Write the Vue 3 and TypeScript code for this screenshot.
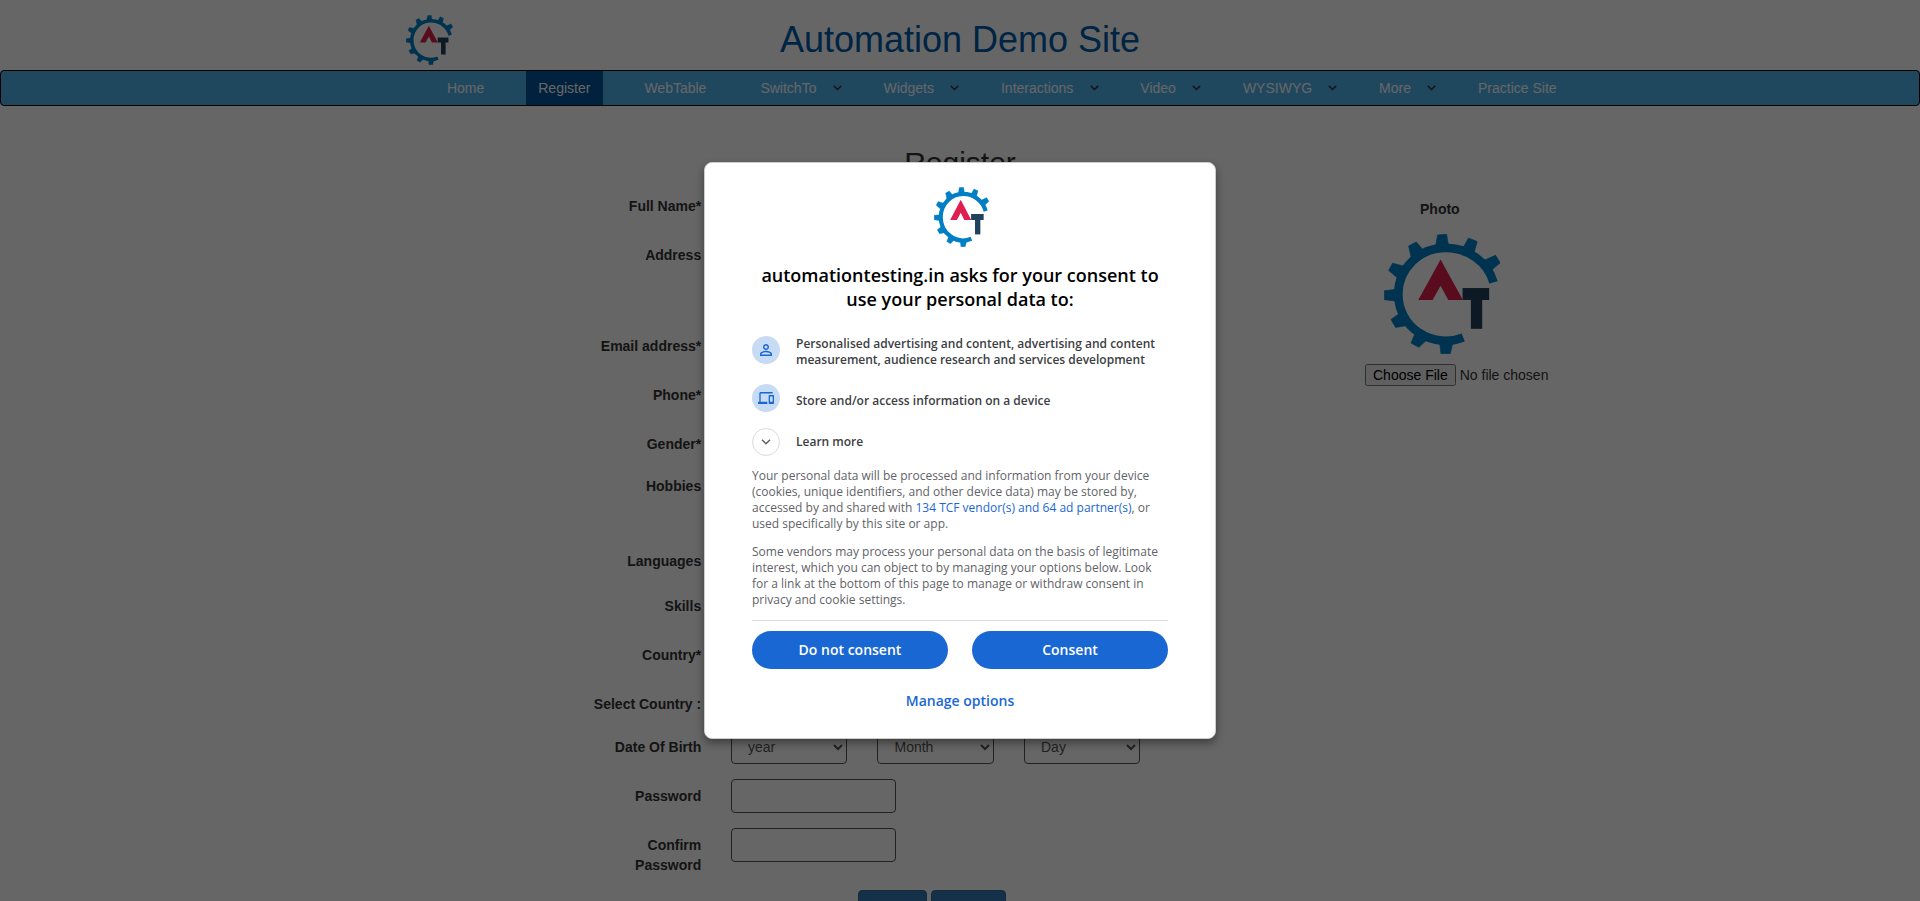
<script setup lang="ts">
import { defineComponent, h } from 'vue'

interface NavItem {
  label: string
  menu?: boolean
  active?: boolean
}

interface FormRow {
  label: string
  height: number
  kind?: 'dob' | 'text'
}

const navItems: NavItem[] = [
  { label: 'Home' },
  { label: 'Register', active: true },
  { label: 'WebTable' },
  { label: 'SwitchTo', menu: true },
  { label: 'Widgets', menu: true },
  { label: 'Interactions', menu: true },
  { label: 'Video', menu: true },
  { label: 'WYSIWYG', menu: true },
  { label: 'More', menu: true },
  { label: 'Practice Site' },
]

const rows: FormRow[] = [
  { label: 'Full Name*', height: 49 },
  { label: 'Address', height: 91 },
  { label: 'Email address*', height: 49 },
  { label: 'Phone*', height: 49 },
  { label: 'Gender*', height: 42 },
  { label: 'Hobbies', height: 75 },
  { label: 'Languages', height: 45 },
  { label: 'Skills', height: 49 },
  { label: 'Country*', height: 49 },
  { label: 'Select Country :', height: 43 },
  { label: 'Date Of Birth', height: 49, kind: 'dob' },
  { label: 'Password', height: 49, kind: 'text' },
  { label: 'Confirm Password', height: 49, kind: 'text' },
]

const dobParts: string[] = ['year', 'Month', 'Day']

const teeth: string[] = [
  '286,168 292,134 319,132 325,168',
  '366,177 385,143 411,154 401,190',
  '428,212 466,195 480,218 452,242',
  '214,208 205,167 228,155 252,183',
  '170,262 145,241 157,219 198,230',
  '170,298 132,302 132,329 170,334',
  '178,370 152,389 166,413 206,406',
  '228,422 212,460 236,473 264,446',
  '298,455 302,492 330,492 339,455',
]

const SiteLogo = defineComponent({
  name: 'SiteLogo',
  setup() {
    return () =>
      h('svg', { viewBox: '131 131 350 362', preserveAspectRatio: 'none' }, [
        h('path', {
          d: 'M460 277 A149 139.5 0 0 0 316 173 A142 139.5 0 0 0 174 312 A142 139.5 0 0 0 369 443',
          fill: 'none',
          stroke: '#007fc5',
          'stroke-width': 26,
        }),
        ...teeth.map((points) =>
          h('polygon', { points, fill: '#007fc5', stroke: '#007fc5', 'stroke-width': 2 }),
        ),
        h('polygon', {
          points: '301,208 368,330 324,330 301,287 277,330 234,330',
          fill: '#e01e4f',
        }),
        h('rect', { x: 367, y: 294, width: 80, height: 36, fill: '#21425c' }),
        h('rect', { x: 392, y: 326, width: 34, height: 91, fill: '#21425c' }),
      ])
  },
})
</script>

<template>
  <div class="page">
    <header class="top">
      <SiteLogo class="top-logo" />
      <h1>Automation Demo Site</h1>
    </header>
    <nav class="navbar">
      <ul>
        <li v-for="item in navItems" :key="item.label" :class="{ active: item.active }">
          <a>{{ item.label }}</a>
          <svg v-if="item.menu" class="caret" viewBox="0 0 9 6">
            <path d="M0.8 0.9 L4.5 4.5 L8.2 0.9" />
          </svg>
        </li>
      </ul>
    </nav>
    <main class="content">
      <h2>Register</h2>
      <div class="columns">
        <form class="form">
          <div
            v-for="row in rows"
            :key="row.label"
            class="row"
            :style="{ height: row.height + 'px' }"
          >
            <label>{{ row.label }}</label>
            <div v-if="row.kind === 'dob'" class="dob">
              <select v-for="part in dobParts" :key="part">
                <option>{{ part }}</option>
              </select>
            </div>
            <input v-else-if="row.kind === 'text'" type="password" />
          </div>
          <div class="actions">
            <span class="btn submit"></span>
            <span class="btn refresh"></span>
          </div>
        </form>
        <aside class="photo">
          <strong>Photo</strong>
          <SiteLogo class="photo-logo" />
          <input type="file" />
        </aside>
      </div>
    </main>

    <div class="overlay">
      <section class="dialog">
        <SiteLogo class="dialog-logo" />
        <h3>automationtesting.in asks for your consent to use your personal data to:</h3>
        <div class="purpose first">
          <span class="disc">
            <svg viewBox="0 0 24 24" width="18" height="18">
              <path
                d="M12 5.9a2.1 2.1 0 1 1 0 4.2 2.1 2.1 0 0 1 0-4.2m0 9c2.970 0 6.100 1.460 6.100 2.100v1.100H5.900V17c0-.64 3.130-2.100 6.100-2.100M12 4C9.790 4 8 5.790 8 8s1.790 4 4 4 4-1.790 4-4-1.790-4-4-4m0 9c-2.670 0-8 1.340-8 4v3h16v-3c0-2.660-5.330-4-8-4"
              />
            </svg>
          </span>
          <span>Personalised advertising and content, advertising and content measurement, audience research and services development</span>
        </div>
        <div class="purpose second">
          <span class="disc">
            <svg viewBox="0 0 24 24" width="16" height="18" preserveAspectRatio="none">
              <path
                d="M4 6h18V4H4c-1.100 0-2 .9-2 2v11H0v3h14v-3H4zm19 2h-6c-.55 0-1 .45-1 1v10c0 .55.45 1 1 1h6c.55 0 1-.45 1-1V9c0-.55-.45-1-1-1m-1 9h-4v-7h4z"
              />
            </svg>
          </span>
          <span>Store and/or access information on a device</span>
        </div>
        <div class="purpose third">
          <span class="disc outline">
            <svg viewBox="0 0 10 6" width="10" height="6">
              <path d="M1 0.8 L5 4.8 L9 0.8" />
            </svg>
          </span>
          <span>Learn more</span>
        </div>
        <p>
          Your personal data will be processed and information from your device (cookies, unique
          identifiers, and other device data) may be stored by, accessed by and shared with
          <a>134 TCF vendor(s) and 64 ad partner(s)</a>, or used specifically by this site or app.
        </p>
        <p>
          Some vendors may process your personal data on the basis of legitimate interest, which you
          can object to by managing your options below. Look for a link at the bottom of this page to
          manage or withdraw consent in privacy and cookie settings.
        </p>
        <div class="choices">
          <button>Do not consent</button>
          <button>Consent</button>
        </div>
        <a class="manage">Manage options</a>
      </section>
    </div>
  </div>
</template>

<style>
body {
  margin: 0;
  overflow: hidden;
}
</style>

<style scoped>
* {
  box-sizing: border-box;
}
.page {
  position: relative;
  height: 901px;
  overflow: hidden;
  background: #fff;
  color: #333;
  font: 14px/20px 'Liberation Sans', Arial, sans-serif;
}
.top {
  display: grid;
  grid-template-columns: 1fr auto 1fr;
  height: 70px;
}
.top-logo {
  width: 47px;
  height: 50px;
  margin: 15px 0 0 406px;
}
h1 {
  margin: 20px 0 0;
  font-size: 36px;
  line-height: 40px;
  font-weight: 400;
  color: #005aaa;
}
.navbar {
  height: 36px;
  border: 1px solid #000;
  border-radius: 4px;
  background: #4eb4ee;
}
.navbar ul {
  display: flex;
  gap: 29px;
  margin: 0;
  padding: 0 0 0 433.4px;
  list-style: none;
}
.navbar li {
  display: flex;
  align-items: center;
  height: 34px;
  white-space: nowrap;
}
.navbar a {
  padding: 0 12.5px;
  color: #fff;
}
.navbar .active {
  background: #00569e;
}
.caret {
  width: 9px;
  height: 6px;
  margin: 0 0.3px 0 3.7px;
}
.caret path {
  fill: none;
  stroke: #333;
  stroke-width: 1.500;
}
h2 {
  margin: 40px 0 0;
  height: 50px;
  text-align: center;
  font-size: 30px;
  line-height: 33px;
  font-weight: 400;
}
.columns {
  display: flex;
}
.form {
  width: 1365px;
}
.row {
  display: flex;
  gap: 29.8px;
  padding-left: 591px;
}
.row label {
  width: 110.2px;
  text-align: right;
  font-weight: 700;
}
.row input,
.row select {
  height: 34px;
  margin-top: -7px;
  border: 1px solid #555;
  border-radius: 4px;
  background: #fff;
  color: #555;
  font: inherit;
}
.row input {
  width: 165px;
}
.row select {
  width: 116.500px;
  padding: 6px 12px;
}
.dob {
  display: flex;
  gap: 30px;
}
.actions {
  display: flex;
  gap: 4px;
  padding: 6px 0 0 858px;
}
.btn {
  height: 34px;
  border: 1px solid #2e6da4;
  border-radius: 4px;
  background: #337ab7;
}
.submit {
  width: 69px;
}
.refresh {
  width: 75px;
}
.photo {
  display: flex;
  flex-direction: column;
  width: 250px;
  padding-top: 3px;
}
.photo strong {
  margin-left: 55px;
}
.photo-logo {
  width: 116.500px;
  height: 120px;
  margin: 15px 0 10px 18.500px;
}
.photo input {
  font: inherit;
}
.overlay {
  position: absolute;
  inset: 0;
  display: flex;
  justify-content: center;
  align-items: flex-start;
  padding-top: 162px;
  background: rgba(0, 0, 0, 0.6);
}
.dialog {
  display: flex;
  flex-direction: column;
  width: 512px;
  height: 577px;
  padding: 24px 47px 0;
  border: 1px solid #ccc;
  border-radius: 8px;
  background: #fff;
  box-shadow: 0 4px 8px 0 rgba(0, 0, 0, 0.4);
  font: 12px/16px 'Open Sans', sans-serif;
  color: #5f6368;
}
.dialog-logo {
  width: 55px;
  height: 60px;
  margin-left: 182px;
}
h3 {
  margin: 16px 0 25px;
  text-align: center;
  font-size: 18px;
  line-height: 24px;
  font-weight: 600;
  color: #000;
}
.purpose {
  display: flex;
  gap: 16px;
  font-weight: 600;
  color: #3c4043;
}
.first {
  height: 48px;
}
.second {
  height: 44px;
}
.third {
  height: 40px;
}
.second span:last-child {
  padding-top: 9px;
}
.third span:last-child {
  padding-top: 6px;
}
.disc {
  display: flex;
  flex: none;
  align-items: center;
  justify-content: center;
  width: 28px;
  height: 28px;
  border-radius: 50%;
  background: #c8dbf5;
  fill: #1967d2;
}
.outline {
  border: 1px solid #dadce0;
  background: #fff;
}
.outline path {
  fill: none;
  stroke: #5f6368;
  stroke-width: 1.500;
}
p {
  margin: 0 0 12px;
}
p a,
.manage {
  color: #1967d2;
}
.choices {
  display: flex;
  gap: 24px;
  padding-top: 10px;
  border-top: 1px solid #dadce0;
}
button {
  flex: 1;
  height: 38px;
  border: 0;
  border-radius: 19px;
  background: #1967d2;
  color: #fff;
  font: 600 14px/20px 'Open Sans', sans-serif;
}
.manage {
  margin-top: 22px;
  text-align: center;
  font-size: 14px;
  line-height: 20px;
  font-weight: 600;
}
</style>
